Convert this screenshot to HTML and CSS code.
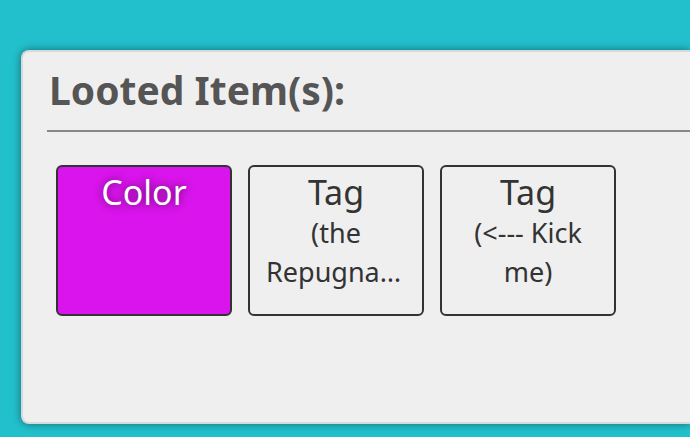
FILE: index.html
```html
<!DOCTYPE html>
<html lang="en">

<head>
    <meta charset="UTF-8">
    <meta name="viewport" content="width=device-width, initial-scale=1.0">
    <title>Looted Items</title>
    <link rel="stylesheet" href="styles.css">
</head>

<body>

    <div class="loot-panel">
        <h2 class="loot-title">Looted Item(s):</h2>

        <div class="loot-list">
            <div class="loot-item color-item">
                <div class="item-name">Color</div>
            </div>

            <div class="loot-item">
                <div class="item-name">Tag</div>
                <div class="item-desc">(the Repugnant Pustule)</div>
            </div>

            <div class="loot-item">
                <div class="item-name">Tag</div>
                <div class="item-desc">(&lt;--- Kick me)</div>
            </div>
        </div>
    </div>

</body>

</html>
```

FILE: styles.css
```css
body {
    font-family: "Noto Sans", "Open Sans", sans-serif;
    margin: 0;
    padding: 50px 0 0 21px;
    background-color: #22c0cc;
    height: 437px;
    box-sizing: border-box;
    overflow: hidden;
}

.loot-panel {
    background-color: #efefef;
    border: 2px solid #d7dadc;
    border-right: none;
    border-radius: 8px 0 0 8px;
    box-shadow: 0 0 8px rgba(0, 0, 0, 0.45);
    height: 374px;
    box-sizing: border-box;
    padding: 0 0 0 24px;
}

.loot-title {
    margin: 0;
    padding: 16px 0 18px 2px;
    font-size: 39px;
    font-weight: bold;
    line-height: 44px;
    color: #555;
    border-bottom: 2px solid #888;
}

.loot-list {
    display: flex;
    gap: 16px;
    padding: 33px 0 0 9px;
}

.loot-item {
    width: 176px;
    height: 151px;
    box-sizing: border-box;
    border: 2px solid #333;
    border-radius: 6px;
    padding: 5px 16px 0;
    text-align: center;
    color: #333;
}

.color-item {
    background-color: #d914ec;
    color: white;
}

.color-item .item-name {
    text-shadow: 0 0 8px rgba(0, 0, 0, 0.6);
}

.item-name {
    font-size: 34px;
    line-height: 41px;
}

.item-desc {
    font-size: 27px;
    line-height: 39px;
    display: -webkit-box;
    -webkit-line-clamp: 2;
    -webkit-box-orient: vertical;
    overflow: hidden;
}
```
